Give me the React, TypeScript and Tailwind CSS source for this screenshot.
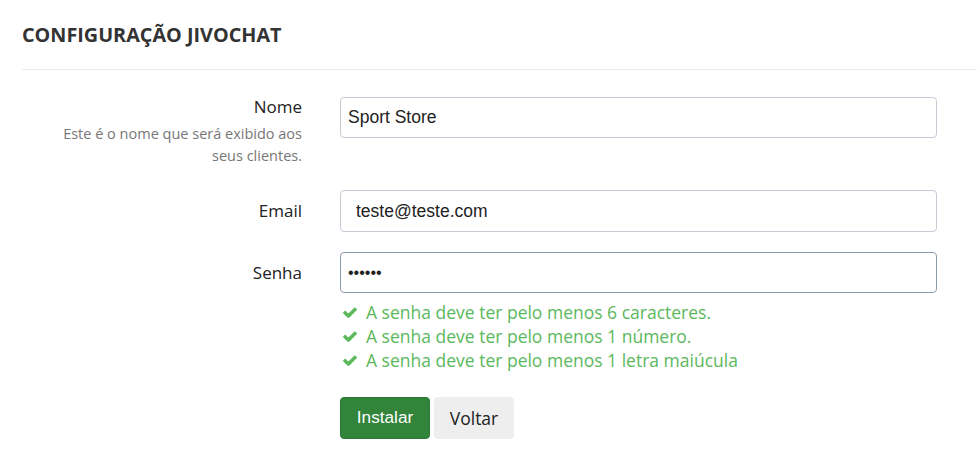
const checks = [
  "A senha deve ter pelo menos 6 caracteres.",
  "A senha deve ter pelo menos 1 número.",
  "A senha deve ter pelo menos 1 letra maiúcula",
];

function CheckIcon() {
  return (
    <svg viewBox="0 0 1792 1792" className="ml-[2px] mr-[8px] h-[17px] w-[16px] shrink-0" fill="#5cb85c">
      <path d="M1671 566q0 40-28 68l-724 724-136 136q-28 28-68 28t-68-28l-136-136-362-362q-28-28-28-68t28-68l136-136q28-28 68-28t68 28l294 295 656-657q28-28 68-28t68 28l136 136q28 28 28 68z" />
    </svg>
  );
}

export default function App() {
  return (
    <div className="min-h-[466px] w-[977px] bg-white pl-[22px] font-['Open_Sans',sans-serif] text-[#333]">
      <div className="flex h-[70px] items-center border-b border-[#ebebeb]">
        <h1 className="text-[19.8px] font-bold text-[#333]">CONFIGURAÇÃO JIVOCHAT</h1>
      </div>

      <form className="pr-[40px] pt-[26px]">
        {/* Nome */}
        <div className="mb-[23px] flex gap-[38px]">
          <div className="w-[280px] shrink-0 text-right">
            <label className="block text-[17px] leading-[22px] text-[#222]">Nome</label>
            <p className="mt-[5px] text-[14.5px] leading-[22px] text-[#777]">
              Este é o nome que será exibido aos
              <br />
              seus clientes.
            </p>
          </div>
          <div className="flex-1 pt-[1px]">
            <input
              readOnly
              value="Sport Store"
              className="h-[41px] w-full rounded-[4px] border border-[#c5ccd6] px-[7px] font-['Liberation_Sans',Arial,sans-serif] text-[17.5px] text-[#222] outline-none"
            />
          </div>
        </div>

        {/* Email */}
        <div className="mb-[20px] flex items-center gap-[38px]">
          <label className="w-[280px] shrink-0 text-right text-[17px] leading-[22px] text-[#222]">
            Email
          </label>
          <input
            readOnly
            value="teste@teste.com"
            className="h-[42px] flex-1 rounded-[4px] border border-[#c5ccd6] px-[15px] font-['Liberation_Sans',Arial,sans-serif] text-[17.5px] text-[#222] outline-none"
          />
        </div>

        {/* Senha */}
        <div className="flex gap-[38px]">
          <label className="w-[280px] shrink-0 pt-[10px] text-right text-[17px] leading-[22px] text-[#222]">
            Senha
          </label>
          <div className="flex-1">
            <input
              readOnly
              type="password"
              value="123456"
              className="h-[41px] w-full rounded-[4px] border border-[#8f9cb0] px-[7px] font-['Liberation_Sans',Arial,sans-serif] text-[16px] text-[#222] outline-none"
            />
            <ul className="mt-[7px] text-[17.5px] leading-[24px] text-[#5cb85c]">
              {checks.map((c) => (
                <li key={c} className="flex items-center">
                  <CheckIcon />
                  {c}
                </li>
              ))}
            </ul>
            <div className="mt-[25px] flex gap-[4px]">
              <button
                type="button"
                className="h-[42px] w-[90px] rounded-[4px] border border-[#2b7a35] bg-[#31843a] font-['Liberation_Sans',Arial,sans-serif] text-[17.2px] text-white"
              >
                Instalar
              </button>
              <button
                type="button"
                className="h-[42px] w-[80px] rounded-[4px] bg-[#eeeeee] text-[17.5px] text-[#222]"
              >
                Voltar
              </button>
            </div>
          </div>
        </div>
      </form>
    </div>
  );
}
